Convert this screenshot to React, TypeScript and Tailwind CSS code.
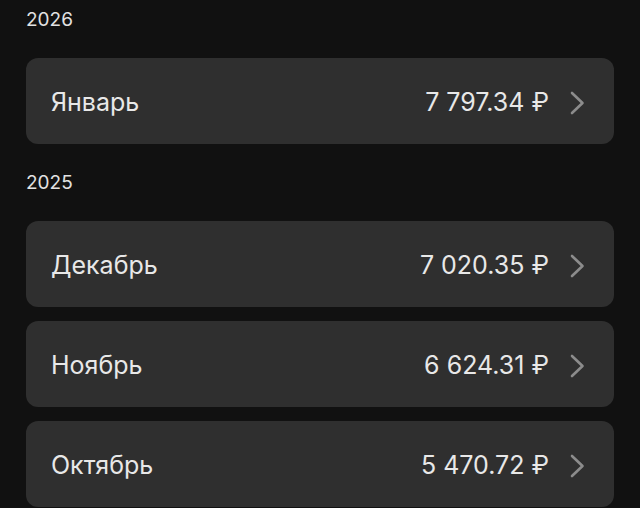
type Row = { month: string; amount: string };

const groups: { year: string; rows: Row[] }[] = [
  { year: '2026', rows: [{ month: 'Январь', amount: '7 797.34 ₽' }] },
  {
    year: '2025',
    rows: [
      { month: 'Декабрь', amount: '7 020.35 ₽' },
      { month: 'Ноябрь', amount: '6 624.31 ₽' },
      { month: 'Октябрь', amount: '5 470.72 ₽' },
    ],
  },
];

function Chevron() {
  return (
    <svg width="15" height="24" viewBox="0 0 15 24" className="ml-[21px] shrink-0" fill="none">
      <path d="M2 2L12.5 12L2 22" stroke="#8c8c8c" strokeWidth="2.6" strokeLinecap="round" strokeLinejoin="round" />
    </svg>
  );
}

function MonthRow({ month, amount }: Row) {
  return (
    <div className="flex h-[86px] items-center rounded-[12px] bg-[#2f2f2f] pl-[25px] pr-[29px] pt-[3px]">
      <span className="flex-1 text-[25px] text-[#e8e8e8]">{month}</span>
      <span className="text-[25px] text-[#e8e8e8]">{amount}</span>
      <Chevron />
    </div>
  );
}

export default function App() {
  return (
    <div
      className="min-h-[508px] w-[640px] overflow-hidden bg-[#111111] px-[26px] pt-[8px]"
      style={{ fontFamily: 'Inter, "Noto Sans", sans-serif' }}
    >
      {groups.map((g, i) => (
        <section key={g.year} className={i > 0 ? 'mt-[27px]' : ''}>
          {/* year heading */}
          <div className="mb-[26px] text-[19px] leading-[24px] text-[#e2e2e2]">{g.year}</div>
          <div className="flex flex-col gap-[14px]">
            {g.rows.map((r) => (
              <MonthRow key={r.month} {...r} />
            ))}
          </div>
        </section>
      ))}
    </div>
  );
}
